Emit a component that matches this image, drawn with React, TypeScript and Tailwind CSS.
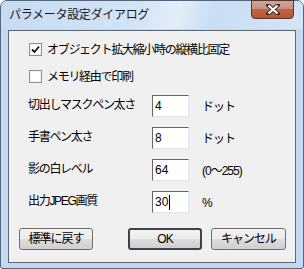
import { useState } from "react"

const font = { fontFamily: '"Liberation Sans", "Noto Sans CJK JP", sans-serif' }

function CheckBox({ checked }: { checked: boolean }) {
  return (
    <span className="w-[13px] h-[13px] border border-[#8e8f8f] bg-[linear-gradient(135deg,#dcdcdc,#ffffff)] flex items-center justify-center shrink-0">
      <span className="w-[11px] h-[11px] border border-[#f4f4f4] bg-white flex items-center justify-center">
        {checked && (
          <svg width="9" height="9" viewBox="0 0 9 9">
            <path d="M1 4.5 L3.5 7 L8 1.5" stroke="#111" strokeWidth="1.8" fill="none" />
          </svg>
        )}
      </span>
    </span>
  )
}

function Field({ label, value, suffix, caret, top }: { label: string; value: string; suffix: string; caret?: boolean; top: string }) {
  return (
    <div className={`flex items-center h-[22px] ${top}`}>
      <span className="w-[143px] shrink-0 pl-[19px] text-[12px] tracking-[-1.3px] leading-none whitespace-nowrap -mt-[2px]">{label}</span>
      <div className="w-[37px] h-[22px] shrink-0 border border-t-[#6f6461] border-l-[#6f6461] border-r-[#d9e5f2] border-b-[#d9e5f2] bg-white flex items-center pl-[2px]">
        <span className="text-[12px] leading-none">{value}</span>
        {caret && <span className="w-px h-[15px] bg-black ml-px" />}
      </div>
      <span className="ml-[13px] text-[12px] tracking-[-1px] leading-none mt-[2px] whitespace-nowrap">{suffix}</span>
    </div>
  )
}

function Button({ children, primary, className }: { children: string; primary?: boolean; className?: string }) {
  return (
    <div
      className={`h-[22px] rounded-[3px] flex items-center justify-center text-[12px] tracking-[-1px] bg-[linear-gradient(#f2f2f2,#ebebeb_50%,#dddddd_51%,#cfcfcf)] ${
        primary ? "border-2 border-[#3d434b]" : "border border-[#707070]"
      } ${className ?? ""}`}
    >
      {children}
    </div>
  )
}

export default function App() {
  const [keepRatio] = useState(true)

  return (
    <div style={font} className="w-[304px] h-[269px] text-black select-none">
      <div className="w-full h-full border border-[#55657a] rounded-t-[7px] rounded-b-[3px] bg-[#c4d9f1] flex flex-col px-[7px] pb-[5px]">
        {/* title bar */}
        <div className="h-[28px] flex items-start justify-between -mx-[7px] px-[8px] rounded-t-[6px] bg-[linear-gradient(105deg,#c6daf2_0%,#d3e4f7_45%,#e2edf9_58%,#c9ddf3_70%,#d5e5f7_100%)]">
          <span className="mt-[6px] text-[12px] leading-[16px] tracking-[-0.3px] text-[#1a1a1a]">パラメータ設定ダイアログ</span>
          <div className="-mt-px mr-px w-[43px] h-[19px] rounded-b-[4px] border border-[#5b3529] bg-[linear-gradient(#cfa597,#c59384_45%,#c3623c_50%,#bc5530)] flex items-center justify-center">
            <svg width="14" height="11" viewBox="0 0 14 11">
              <path d="M2 1 L12 10 M12 1 L2 10" stroke="#3b2b2b" strokeWidth="4" strokeLinecap="square" />
              <path d="M2.5 1.5 L11.5 9.5 M11.5 1.5 L2.5 9.5" stroke="#ffffff" strokeWidth="2.2" />
            </svg>
          </div>
        </div>

        {/* client area */}
        <div className="flex-1 mt-px border border-[#5d6877] bg-[#f0f0f0] flex flex-col">
          <div className="flex items-center gap-[5px] pl-[20px] mt-[12px] h-[13px]">
            <CheckBox checked={keepRatio} />
            <span className="text-[12px] tracking-[-1.3px] leading-none whitespace-nowrap">オブジェクト拡大縮小時の縦横比固定</span>
          </div>
          <div className="flex items-center gap-[5px] pl-[20px] mt-[14px] h-[13px]">
            <CheckBox checked={false} />
            <span className="text-[12px] tracking-[-1.3px] leading-none whitespace-nowrap">メモリ経由で印刷</span>
          </div>

          <Field top="mt-[12px]" label="切出しマスクペン太さ" value="4" suffix="ドット" />
          <Field top="mt-[10px]" label="手書ペン太さ" value="8" suffix="ドット" />
          <Field top="mt-[10px]" label="影の白レベル" value="64" suffix="(0〜255)" />
          <Field top="mt-[10px]" label="出力JPEG画質" value="30" suffix="%" caret />

          <div className="flex mt-[15px] pl-[10px]">
            <Button className="w-[74px]">標準に戻す</Button>
            <Button primary className="w-[74px] ml-[35px]">OK</Button>
            <Button className="w-[75px] ml-[9px]">キャンセル</Button>
          </div>
        </div>
      </div>
    </div>
  )
}
